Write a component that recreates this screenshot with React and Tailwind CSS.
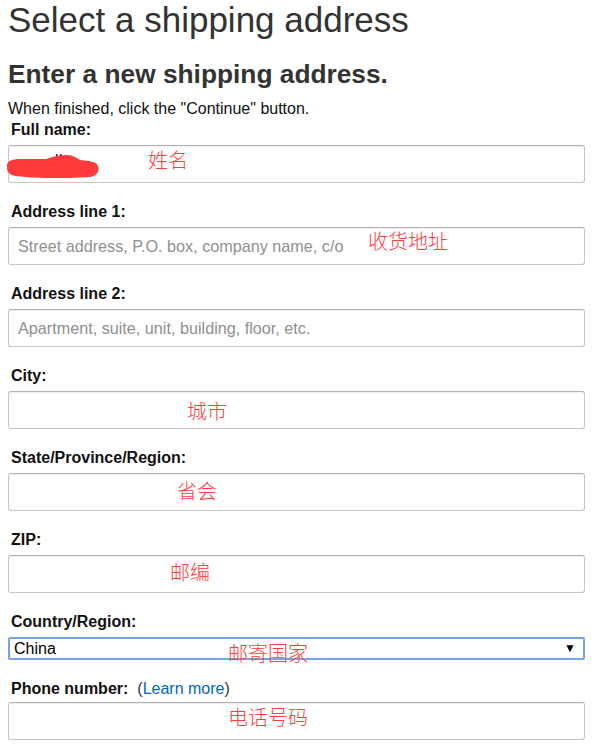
import React from "react";

const sans = { fontFamily: '"Liberation Sans", Arial, sans-serif' };

function Note({ children, className }) {
  return (
    <span
      className={`pointer-events-none absolute whitespace-nowrap text-[20px] font-light leading-[20px] text-[#ff3b3b] [font-family:'Noto_Sans_CJK_SC',sans-serif] ${className}`}
    >
      {children}
    </span>
  );
}

function Field({ label, placeholder, note, noteClass, extraLabel, labelMb = "mb-[5px]", children }) {
  return (
    <div className="flex flex-col">
      <label className={`${labelMb} pl-[3px] text-[16px] font-bold leading-[20px] text-[#111]`}>
        {label}
        {extraLabel}
      </label>
      <div className="relative">
        <input
          type="text"
          placeholder={placeholder}
          className="block h-[38px] w-full rounded-[3px] border border-[#c6c6c6] border-t-[#b2b2b2] bg-white px-[9px] text-[16.2px] text-[#111] shadow-[inset_0_1px_0_rgba(0,0,0,0.06)] outline-none placeholder:text-[#8f8f8f]"
        />
        {children}
        {note && <Note className={noteClass}>{note}</Note>}
      </div>
    </div>
  );
}

export default function App() {
  return (
    <div className="min-h-[747px] w-[599px] bg-white px-2 text-[#111]" style={sans}>
      <div className="flex w-[577px] flex-col">
        <h1 className="text-[35px] font-normal leading-[40px] text-[#333]">
          Select a shipping address
        </h1>
        <h2 className="mt-[19px] text-[26.3px] font-bold leading-[30px] text-[#333]">
          Enter a new shipping address.
        </h2>
        <p className="mt-[10px] text-[16px] leading-[20px] text-[#111]">
          When finished, click the "Continue" button.
        </p>

        <div className="mt-[1px] flex flex-col gap-[19px]">
          <Field label="Full name:" note="姓名" noteClass="left-[140px] top-[5px]">
            <svg
              className="pointer-events-none absolute left-[-2px] top-[9px]"
              width="94"
              height="26"
              viewBox="0 0 94 26"
            >
              <path
                d="M1 13 C0 7 6 5 14 5 L40 5 C46 3 52 1 60 1 C66 1 70 3 74 6 C82 7 90 7 92 12 C94 18 90 22 84 23 C70 24 56 24 44 24 C30 24 18 23 10 22 C3 21 1 18 1 13 Z"
                fill="#ff3b3b"
              />
              <rect x="50" y="0" width="1.5" height="2" fill="#334" />
              <rect x="54" y="0" width="1.5" height="2" fill="#334" />
            </svg>
          </Field>
          <Field
            label="Address line 1:"
            placeholder="Street address, P.O. box, company name, c/o"
            note="收货地址"
            noteClass="left-[360px] top-[4px]"
          />
          <Field
            label="Address line 2:"
            placeholder="Apartment, suite, unit, building, floor, etc."
          />
          <Field label="City:" note="城市" noteClass="left-[179px] top-[10px]" />
          <Field
            label="State/Province/Region:"
            note="省会"
            noteClass="left-[169px] top-[8px]"
          />
          <Field label="ZIP:" note="邮编" noteClass="left-[162px] top-[7px]" />

          <div className="flex flex-col">
            <label className="mb-[5px] pl-[3px] text-[16px] font-bold leading-[20px] text-[#111]">
              Country/Region:
            </label>
            <div className="relative">
              <select
                defaultValue="China"
                className="block h-[23px] w-full appearance-none rounded-[2px] border-2 border-[#77a3e6] bg-white pl-[4px] text-[16px] leading-[19px] text-black outline-none"
                style={sans}
              >
                <option>China</option>
                <option>United States</option>
              </select>
              <span className="pointer-events-none absolute right-[9px] top-[3px] text-[12px] leading-[16px] text-black">
                ▼
              </span>
              <Note className="left-[220px] top-[6px]">邮寄国家</Note>
            </div>
          </div>

          <Field
            label="Phone number:"
            labelMb="mb-[3px]"
            extraLabel={
              <span className="ml-[9px] font-normal text-[#333]">
                (<a href="#" className="text-[#0066c0]">Learn more</a>)
              </span>
            }
            note="电话号码"
            noteClass="left-[220px] top-[5px]"
          />
        </div>
      </div>
    </div>
  );
}
